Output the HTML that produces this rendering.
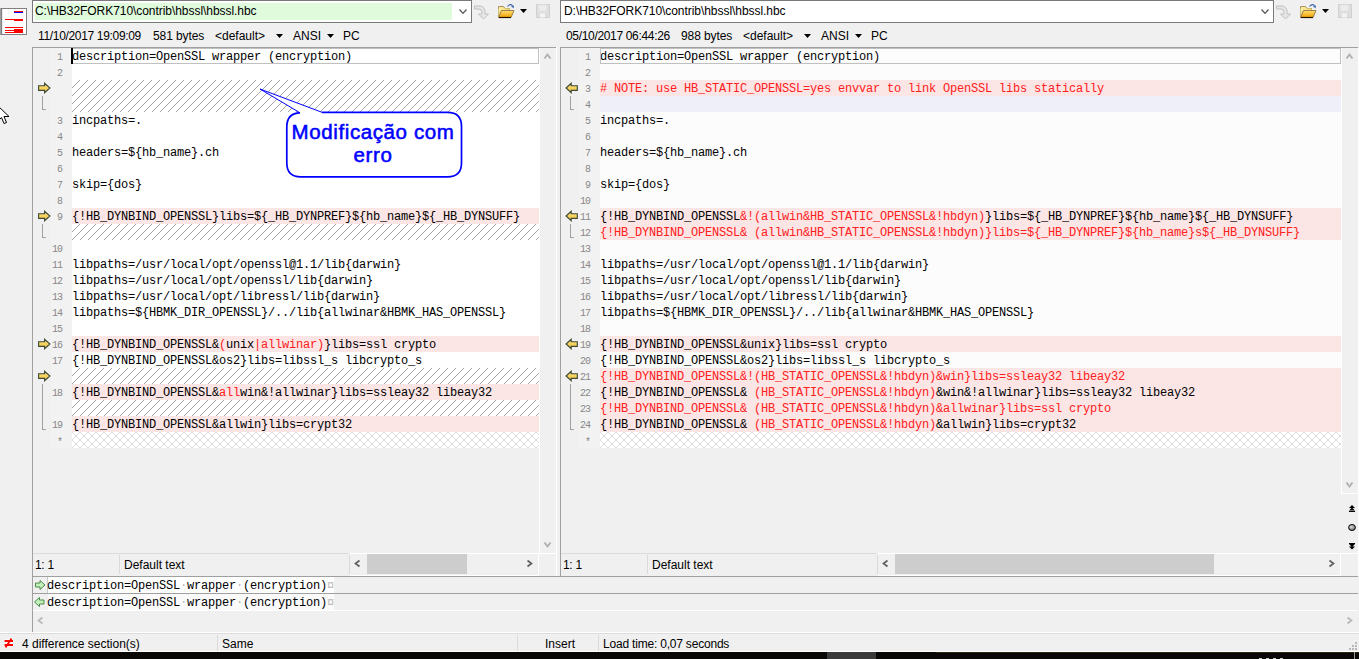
<!DOCTYPE html><html><head><meta charset="utf-8"><style>
*{margin:0;padding:0;box-sizing:border-box}
html,body{width:1359px;height:659px;overflow:hidden;background:#f0f0f0}
body{position:relative;font-family:"Liberation Sans",sans-serif;font-size:12px;color:#000}
.a{position:absolute;display:block}
.t{position:absolute;white-space:pre;line-height:16px;height:16px}
.code{position:absolute;white-space:pre;font-family:"Liberation Mono",monospace;font-size:12px;letter-spacing:-0.2px;line-height:16px;height:16px;color:#000;padding-top:1px}
.r{color:#ff2020}
.g{color:#b8b8b8}
.num{position:absolute;text-align:right;font-family:"Liberation Mono",monospace;font-size:10px;letter-spacing:-1px;line-height:16px;color:#888;height:16px;padding-top:2px}
</style></head><body>
<svg width="0" height="0" style="position:absolute"><defs>
<pattern id="hatch" patternUnits="userSpaceOnUse" width="8" height="8" x="0" y="0"><rect width="8" height="8" fill="#fff"/><g fill="#a8a8a8" shape-rendering="crispEdges"><rect x="7" y="0" width="1" height="1"/><rect x="6" y="1" width="1" height="1"/><rect x="5" y="2" width="1" height="1"/><rect x="4" y="3" width="1" height="1"/><rect x="3" y="4" width="1" height="1"/><rect x="2" y="5" width="1" height="1"/><rect x="1" y="6" width="1" height="1"/><rect x="0" y="7" width="1" height="1"/></g></pattern>
<pattern id="cross" patternUnits="userSpaceOnUse" width="8" height="8"><rect width="8" height="8" fill="#fff"/><g fill="#dcdcdc" shape-rendering="crispEdges"><rect x="7" y="0" width="1" height="1"/><rect x="6" y="1" width="1" height="1"/><rect x="5" y="2" width="1" height="1"/><rect x="4" y="3" width="1" height="1"/><rect x="3" y="4" width="1" height="1"/><rect x="2" y="5" width="1" height="1"/><rect x="1" y="6" width="1" height="1"/><rect x="0" y="7" width="1" height="1"/><rect x="0" y="0" width="1" height="1"/><rect x="1" y="1" width="1" height="1"/><rect x="2" y="2" width="1" height="1"/><rect x="3" y="3" width="1" height="1"/><rect x="4" y="4" width="1" height="1"/><rect x="5" y="5" width="1" height="1"/><rect x="6" y="6" width="1" height="1"/><rect x="7" y="7" width="1" height="1"/></g></pattern>
</defs></svg>
<div class="a" style="left:0px;top:8px;width:1px;height:27px;background:#a0a0a0;"></div>
<div class="a" style="left:1px;top:8px;width:26px;height:27px;border:1px solid #808080;background:#fff"></div>
<div class="a" style="left:2px;top:9px;width:1px;height:25px;background:#ececec;"></div>
<div class="a" style="left:14px;top:11px;width:9px;height:1px;background:#ff0000;"></div>
<div class="a" style="left:14px;top:12px;width:9px;height:1px;background:#0000ff;"></div>
<div class="a" style="left:5px;top:19px;width:9px;height:1px;background:#ff0000;"></div>
<div class="a" style="left:14px;top:19px;width:9px;height:2px;background:#ff0000;"></div>
<div class="a" style="left:5px;top:27px;width:18px;height:1px;background:#ff0000;"></div>
<div class="a" style="left:14px;top:29px;width:9px;height:4px;background:#ff0000;"></div>
<div class="a" style="left:5px;top:30px;width:9px;height:1px;background:#ff0000;"></div>
<div class="a" style="left:5px;top:32px;width:9px;height:1px;background:#ff0000;"></div>
<div class="a" style="left:32px;top:0px;width:440px;height:23px;border:1px solid #7a7a7a;background:#fff"></div>
<div class="a" style="left:35px;top:3px;width:417px;height:17px;background:#dffbdc;"></div>
<div class="t" style="left:35px;top:3px;letter-spacing:-0.05px">C:\HB32FORK710\contrib\hbssl\hbssl.hbc</div>
<svg class="a" style="left:459px;top:9px;overflow:visible" width="8" height="5"><path d="M0.5 0.5 L4.0 4.5 L7.5 0.5" fill="none" stroke="#505050" stroke-width="1.15"/></svg>
<svg class="a" style="left:474px;top:5px" width="16" height="15" viewBox="0 0 16 15">
<path d="M0.5 1 H6 Q10 1 11 6 V9 H14.5 L9.5 14 L4.5 9 H8 V7 Q7.5 4 5 4 H0.5 Z" fill="#e6e6e6" stroke="#c0c0c0" stroke-width="1"/></svg>
<svg class="a" style="left:497px;top:3px" width="18" height="16" viewBox="0 0 18 16">
<defs><linearGradient id="fg497" x1="0" y1="0" x2="1" y2="1"><stop offset="0" stop-color="#fff4a8"/><stop offset="1" stop-color="#e8c040"/></linearGradient>
<linearGradient id="fh497" x1="0" y1="0" x2="0" y2="1"><stop offset="0" stop-color="#ffe070"/><stop offset="1" stop-color="#f0a000"/></linearGradient></defs>
<path d="M1.5 14.5 V3.5 H6.5 L8 5.5 H12.5 V7.5" fill="url(#fg497)" stroke="#a89060" stroke-width="1"/>
<path d="M1.5 14.5 V5.5 H12.5 V8 H4.5 Z" fill="url(#fg497)" stroke="none"/>
<path d="M1.5 14.5 L4.5 7.5 H17 L14 14.5 Z" fill="url(#fh497)" stroke="#9a8050" stroke-width="1"/>
<path d="M2 14.5 H14" stroke="#201400" stroke-width="1.2"/>
<path d="M10.5 3.5 Q13 0.5 15.5 2.5" fill="none" stroke="#3a64a8" stroke-width="1.1"/><path d="M14 3 L17 2.5 L16.5 5.5 Z" fill="#3a64a8"/>
</svg>
<svg class="a" style="left:520px;top:9px" width="7" height="4"><path d="M0 0 H7 L3.5 4 Z" fill="#000"/></svg>
<svg class="a" style="left:536px;top:4px" width="14" height="14" viewBox="0 0 14 14">
<rect x="0.5" y="0.5" width="13" height="13" fill="#dedede" stroke="#d0d0d0"/>
<rect x="2.5" y="1" width="8" height="6" fill="#ececec" stroke="#e2e2e2"/>
<rect x="4" y="9.5" width="5" height="4" fill="#f4f4f4"/></svg>
<div class="a" style="left:560px;top:0px;width:714px;height:23px;border:1px solid #7a7a7a;background:#fff"></div>
<div class="t" style="left:564px;top:3px;letter-spacing:-0.05px">D:\HB32FORK710\contrib\hbssl\hbssl.hbc</div>
<svg class="a" style="left:1261px;top:9px;overflow:visible" width="8" height="5"><path d="M0.5 0.5 L4.0 4.5 L7.5 0.5" fill="none" stroke="#505050" stroke-width="1.15"/></svg>
<svg class="a" style="left:1276px;top:5px" width="16" height="15" viewBox="0 0 16 15">
<path d="M0.5 1 H6 Q10 1 11 6 V9 H14.5 L9.5 14 L4.5 9 H8 V7 Q7.5 4 5 4 H0.5 Z" fill="#e6e6e6" stroke="#c0c0c0" stroke-width="1"/></svg>
<svg class="a" style="left:1299px;top:3px" width="18" height="16" viewBox="0 0 18 16">
<defs><linearGradient id="fg1299" x1="0" y1="0" x2="1" y2="1"><stop offset="0" stop-color="#fff4a8"/><stop offset="1" stop-color="#e8c040"/></linearGradient>
<linearGradient id="fh1299" x1="0" y1="0" x2="0" y2="1"><stop offset="0" stop-color="#ffe070"/><stop offset="1" stop-color="#f0a000"/></linearGradient></defs>
<path d="M1.5 14.5 V3.5 H6.5 L8 5.5 H12.5 V7.5" fill="url(#fg1299)" stroke="#a89060" stroke-width="1"/>
<path d="M1.5 14.5 V5.5 H12.5 V8 H4.5 Z" fill="url(#fg1299)" stroke="none"/>
<path d="M1.5 14.5 L4.5 7.5 H17 L14 14.5 Z" fill="url(#fh1299)" stroke="#9a8050" stroke-width="1"/>
<path d="M2 14.5 H14" stroke="#201400" stroke-width="1.2"/>
<path d="M10.5 3.5 Q13 0.5 15.5 2.5" fill="none" stroke="#3a64a8" stroke-width="1.1"/><path d="M14 3 L17 2.5 L16.5 5.5 Z" fill="#3a64a8"/>
</svg>
<svg class="a" style="left:1322px;top:9px" width="7" height="4"><path d="M0 0 H7 L3.5 4 Z" fill="#000"/></svg>
<svg class="a" style="left:1338px;top:4px" width="14" height="14" viewBox="0 0 14 14">
<rect x="0.5" y="0.5" width="13" height="13" fill="#dedede" stroke="#d0d0d0"/>
<rect x="2.5" y="1" width="8" height="6" fill="#ececec" stroke="#e2e2e2"/>
<rect x="4" y="9.5" width="5" height="4" fill="#f4f4f4"/></svg>
<div class="t" style="left:38px;top:28px;letter-spacing:-0.33px">11/10/2017 19:09:09</div>
<div class="t" style="left:153px;top:28px;letter-spacing:-0.1px">581 bytes</div>
<div class="t" style="left:215px;top:28px;">&lt;default&gt;</div>
<svg class="a" style="left:276px;top:34px" width="7" height="4"><path d="M0 0 H7 L3.5 4 Z" fill="#000"/></svg>
<div class="t" style="left:293px;top:28px;">ANSI</div>
<svg class="a" style="left:327px;top:34px" width="7" height="4"><path d="M0 0 H7 L3.5 4 Z" fill="#000"/></svg>
<div class="t" style="left:343px;top:28px;">PC</div>
<div class="t" style="left:566px;top:28px;letter-spacing:-0.33px">05/10/2017 06:44:26</div>
<div class="t" style="left:681px;top:28px;letter-spacing:-0.1px">988 bytes</div>
<div class="t" style="left:743px;top:28px;">&lt;default&gt;</div>
<svg class="a" style="left:804px;top:34px" width="7" height="4"><path d="M0 0 H7 L3.5 4 Z" fill="#000"/></svg>
<div class="t" style="left:821px;top:28px;">ANSI</div>
<svg class="a" style="left:855px;top:34px" width="7" height="4"><path d="M0 0 H7 L3.5 4 Z" fill="#000"/></svg>
<div class="t" style="left:871px;top:28px;">PC</div>
<div class="a" style="left:32px;top:47px;width:524px;height:1px;background:#a0a0a0;"></div>
<div class="a" style="left:560px;top:47px;width:798px;height:1px;background:#a0a0a0;"></div>
<div class="a" style="left:32px;top:47px;width:1px;height:585px;background:#a0a0a0;"></div>
<div class="a" style="left:560px;top:47px;width:1px;height:529px;background:#a0a0a0;"></div>
<div class="a" style="left:556px;top:47px;width:1px;height:529px;background:#fff;"></div>
<div class="a" style="left:1358px;top:48px;width:1px;height:528px;background:#fff;"></div>
<div class="a" style="left:51px;top:48px;width:21px;height:400px;background:#f2f2f2"></div>
<div class="a" style="left:72px;top:48px;width:467px;height:16px;background:#ffffff"></div>
<div class="num" style="left:51px;top:48px;width:11px;">1</div>
<div class="code" style="left:72px;top:48px">description=OpenSSL wrapper (encryption)</div>
<div class="a" style="left:72px;top:64px;width:467px;height:16px;background:#ffffff"></div>
<div class="num" style="left:51px;top:64px;width:11px;">2</div>
<svg class="a" style="left:72px;top:80px" width="467" height="16"><rect width="467" height="16" fill="url(#hatch)"/></svg>
<svg class="a" style="left:72px;top:96px" width="467" height="16"><rect width="467" height="16" fill="url(#hatch)"/></svg>
<div class="a" style="left:72px;top:112px;width:467px;height:16px;background:#ffffff"></div>
<div class="num" style="left:51px;top:112px;width:11px;">3</div>
<div class="code" style="left:72px;top:112px">incpaths=.</div>
<div class="a" style="left:72px;top:128px;width:467px;height:16px;background:#ffffff"></div>
<div class="num" style="left:51px;top:128px;width:11px;">4</div>
<div class="a" style="left:72px;top:144px;width:467px;height:16px;background:#ffffff"></div>
<div class="num" style="left:51px;top:144px;width:11px;">5</div>
<div class="code" style="left:72px;top:144px">headers=${hb_name}.ch</div>
<div class="a" style="left:72px;top:160px;width:467px;height:16px;background:#ffffff"></div>
<div class="num" style="left:51px;top:160px;width:11px;">6</div>
<div class="a" style="left:72px;top:176px;width:467px;height:16px;background:#ffffff"></div>
<div class="num" style="left:51px;top:176px;width:11px;">7</div>
<div class="code" style="left:72px;top:176px">skip={dos}</div>
<div class="a" style="left:72px;top:192px;width:467px;height:16px;background:#ffffff"></div>
<div class="num" style="left:51px;top:192px;width:11px;">8</div>
<div class="a" style="left:72px;top:208px;width:467px;height:16px;background:#fbe5e5"></div>
<div class="num" style="left:51px;top:208px;width:11px;">9</div>
<div class="code" style="left:72px;top:208px">{!HB_DYNBIND_OPENSSL}libs=${_HB_DYNPREF}${hb_name}${_HB_DYNSUFF}</div>
<svg class="a" style="left:72px;top:224px" width="467" height="16"><rect width="467" height="16" fill="url(#hatch)"/></svg>
<div class="a" style="left:72px;top:240px;width:467px;height:16px;background:#ffffff"></div>
<div class="num" style="left:51px;top:240px;width:11px;">10</div>
<div class="a" style="left:72px;top:256px;width:467px;height:16px;background:#ffffff"></div>
<div class="num" style="left:51px;top:256px;width:11px;">11</div>
<div class="code" style="left:72px;top:256px">libpaths=/usr/local/opt/openssl@1.1/lib{darwin}</div>
<div class="a" style="left:72px;top:272px;width:467px;height:16px;background:#ffffff"></div>
<div class="num" style="left:51px;top:272px;width:11px;">12</div>
<div class="code" style="left:72px;top:272px">libpaths=/usr/local/opt/openssl/lib{darwin}</div>
<div class="a" style="left:72px;top:288px;width:467px;height:16px;background:#ffffff"></div>
<div class="num" style="left:51px;top:288px;width:11px;">13</div>
<div class="code" style="left:72px;top:288px">libpaths=/usr/local/opt/libressl/lib{darwin}</div>
<div class="a" style="left:72px;top:304px;width:467px;height:16px;background:#ffffff"></div>
<div class="num" style="left:51px;top:304px;width:11px;">14</div>
<div class="code" style="left:72px;top:304px">libpaths=${HBMK_DIR_OPENSSL}/../lib{allwinar&amp;HBMK_HAS_OPENSSL}</div>
<div class="a" style="left:72px;top:320px;width:467px;height:16px;background:#ffffff"></div>
<div class="num" style="left:51px;top:320px;width:11px;">15</div>
<div class="a" style="left:72px;top:336px;width:467px;height:16px;background:#fbe5e5"></div>
<div class="num" style="left:51px;top:336px;width:11px;">16</div>
<div class="code" style="left:72px;top:336px">{!HB_DYNBIND_OPENSSL&amp;<span class="r">(</span>unix<span class="r">|allwinar)</span>}libs=ssl crypto</div>
<div class="a" style="left:72px;top:352px;width:467px;height:16px;background:#ffffff"></div>
<div class="num" style="left:51px;top:352px;width:11px;">17</div>
<div class="code" style="left:72px;top:352px">{!HB_DYNBIND_OPENSSL&amp;os2}libs=libssl_s libcrypto_s</div>
<svg class="a" style="left:72px;top:368px" width="467" height="16"><rect width="467" height="16" fill="url(#hatch)"/></svg>
<div class="a" style="left:72px;top:384px;width:467px;height:16px;background:#fbe5e5"></div>
<div class="num" style="left:51px;top:384px;width:11px;">18</div>
<div class="code" style="left:72px;top:384px">{!HB_DYNBIND_OPENSSL&amp;<span class="r">all</span>win&amp;!allwinar}libs=ssleay32 libeay32</div>
<svg class="a" style="left:72px;top:400px" width="467" height="16"><rect width="467" height="16" fill="url(#hatch)"/></svg>
<div class="a" style="left:72px;top:416px;width:467px;height:16px;background:#fbe5e5"></div>
<div class="num" style="left:51px;top:416px;width:11px;">19</div>
<div class="code" style="left:72px;top:416px">{!HB_DYNBIND_OPENSSL&amp;allwin}libs=crypt32</div>
<svg class="a" style="left:72px;top:432px" width="467" height="16"><rect width="467" height="16" fill="url(#cross)"/></svg>
<div class="num" style="left:51px;top:432px;width:11px;padding-top:3px;">*</div>
<div class="a" style="left:579px;top:48px;width:21px;height:400px;background:#f2f2f2"></div>
<div class="a" style="left:600px;top:48px;width:741px;height:16px;background:#fcfcfc"></div>
<div class="num" style="left:579px;top:48px;width:11px;">1</div>
<div class="code" style="left:600px;top:48px">description=OpenSSL wrapper (encryption)</div>
<div class="a" style="left:600px;top:64px;width:741px;height:16px;background:#fcfcfc"></div>
<div class="num" style="left:579px;top:64px;width:11px;">2</div>
<div class="a" style="left:600px;top:80px;width:741px;height:16px;background:#fbe5e5"></div>
<div class="num" style="left:579px;top:80px;width:11px;">3</div>
<div class="code" style="left:600px;top:80px"><span class="r"># NOTE: use HB_STATIC_OPENSSL=yes envvar to link OpenSSL libs statically</span></div>
<div class="a" style="left:600px;top:96px;width:741px;height:16px;background:#efeffa"></div>
<div class="num" style="left:579px;top:96px;width:11px;">4</div>
<div class="a" style="left:600px;top:112px;width:741px;height:16px;background:#fcfcfc"></div>
<div class="num" style="left:579px;top:112px;width:11px;">5</div>
<div class="code" style="left:600px;top:112px">incpaths=.</div>
<div class="a" style="left:600px;top:128px;width:741px;height:16px;background:#fcfcfc"></div>
<div class="num" style="left:579px;top:128px;width:11px;">6</div>
<div class="a" style="left:600px;top:144px;width:741px;height:16px;background:#fcfcfc"></div>
<div class="num" style="left:579px;top:144px;width:11px;">7</div>
<div class="code" style="left:600px;top:144px">headers=${hb_name}.ch</div>
<div class="a" style="left:600px;top:160px;width:741px;height:16px;background:#fcfcfc"></div>
<div class="num" style="left:579px;top:160px;width:11px;">8</div>
<div class="a" style="left:600px;top:176px;width:741px;height:16px;background:#fcfcfc"></div>
<div class="num" style="left:579px;top:176px;width:11px;">9</div>
<div class="code" style="left:600px;top:176px">skip={dos}</div>
<div class="a" style="left:600px;top:192px;width:741px;height:16px;background:#fcfcfc"></div>
<div class="num" style="left:579px;top:192px;width:11px;">10</div>
<div class="a" style="left:600px;top:208px;width:741px;height:16px;background:#fbe5e5"></div>
<div class="num" style="left:579px;top:208px;width:11px;">11</div>
<div class="code" style="left:600px;top:208px">{!HB_DYNBIND_OPENSSL<span class="r">&amp;!(allwin&amp;HB_STATIC_OPENSSL&amp;!hbdyn)</span>}libs=${_HB_DYNPREF}${hb_name}${_HB_DYNSUFF}</div>
<div class="a" style="left:600px;top:224px;width:741px;height:16px;background:#fbe5e5"></div>
<div class="num" style="left:579px;top:224px;width:11px;">12</div>
<div class="code" style="left:600px;top:224px"><span class="r">{!HB_DYNBIND_OPENSSL&amp; (allwin&amp;HB_STATIC_OPENSSL&amp;!hbdyn)}libs=${_HB_DYNPREF}${hb_name}s${_HB_DYNSUFF}</span></div>
<div class="a" style="left:600px;top:240px;width:741px;height:16px;background:#fcfcfc"></div>
<div class="num" style="left:579px;top:240px;width:11px;">13</div>
<div class="a" style="left:600px;top:256px;width:741px;height:16px;background:#fcfcfc"></div>
<div class="num" style="left:579px;top:256px;width:11px;">14</div>
<div class="code" style="left:600px;top:256px">libpaths=/usr/local/opt/openssl@1.1/lib{darwin}</div>
<div class="a" style="left:600px;top:272px;width:741px;height:16px;background:#fcfcfc"></div>
<div class="num" style="left:579px;top:272px;width:11px;">15</div>
<div class="code" style="left:600px;top:272px">libpaths=/usr/local/opt/openssl/lib{darwin}</div>
<div class="a" style="left:600px;top:288px;width:741px;height:16px;background:#fcfcfc"></div>
<div class="num" style="left:579px;top:288px;width:11px;">16</div>
<div class="code" style="left:600px;top:288px">libpaths=/usr/local/opt/libressl/lib{darwin}</div>
<div class="a" style="left:600px;top:304px;width:741px;height:16px;background:#fcfcfc"></div>
<div class="num" style="left:579px;top:304px;width:11px;">17</div>
<div class="code" style="left:600px;top:304px">libpaths=${HBMK_DIR_OPENSSL}/../lib{allwinar&amp;HBMK_HAS_OPENSSL}</div>
<div class="a" style="left:600px;top:320px;width:741px;height:16px;background:#fcfcfc"></div>
<div class="num" style="left:579px;top:320px;width:11px;">18</div>
<div class="a" style="left:600px;top:336px;width:741px;height:16px;background:#fbe5e5"></div>
<div class="num" style="left:579px;top:336px;width:11px;">19</div>
<div class="code" style="left:600px;top:336px">{!HB_DYNBIND_OPENSSL&amp;unix}libs=ssl crypto</div>
<div class="a" style="left:600px;top:352px;width:741px;height:16px;background:#fcfcfc"></div>
<div class="num" style="left:579px;top:352px;width:11px;">20</div>
<div class="code" style="left:600px;top:352px">{!HB_DYNBIND_OPENSSL&amp;os2}libs=libssl_s libcrypto_s</div>
<div class="a" style="left:600px;top:368px;width:741px;height:16px;background:#fbe5e5"></div>
<div class="num" style="left:579px;top:368px;width:11px;">21</div>
<div class="code" style="left:600px;top:368px"><span class="r">{!HB_DYNBIND_OPENSSL&amp;!(HB_STATIC_OPENSSL&amp;!hbdyn)&amp;win}libs=ssleay32 libeay32</span></div>
<div class="a" style="left:600px;top:384px;width:741px;height:16px;background:#fbe5e5"></div>
<div class="num" style="left:579px;top:384px;width:11px;">22</div>
<div class="code" style="left:600px;top:384px">{!HB_DYNBIND_OPENSSL&amp; <span class="r">(HB_STATIC_OPENSSL&amp;!hbdyn)</span>&amp;win&amp;!allwinar}libs=ssleay32 libeay32</div>
<div class="a" style="left:600px;top:400px;width:741px;height:16px;background:#fbe5e5"></div>
<div class="num" style="left:579px;top:400px;width:11px;">23</div>
<div class="code" style="left:600px;top:400px"><span class="r">{!HB_DYNBIND_OPENSSL&amp; (HB_STATIC_OPENSSL&amp;!hbdyn)&amp;allwinar}libs=ssl crypto</span></div>
<div class="a" style="left:600px;top:416px;width:741px;height:16px;background:#fbe5e5"></div>
<div class="num" style="left:579px;top:416px;width:11px;">24</div>
<div class="code" style="left:600px;top:416px">{!HB_DYNBIND_OPENSSL&amp; <span class="r">(HB_STATIC_OPENSSL&amp;!hbdyn)</span>&amp;allwin}libs=crypt32</div>
<svg class="a" style="left:600px;top:432px" width="741" height="16"><rect width="741" height="16" fill="url(#cross)"/></svg>
<div class="num" style="left:579px;top:432px;width:11px;padding-top:3px;">*</div>
<div class="a" style="left:72px;top:48px;width:467px;height:16px;border:1px solid #c0c0c0;border-left:none"></div>
<div class="a" style="left:71px;top:48px;width:2px;height:16px;background:#000;"></div>
<div class="a" style="left:600px;top:48px;width:741px;height:16px;border:1px solid #c0c0c0"></div>
<svg class="a" style="left:38px;top:82px" width="14" height="12" viewBox="0 0 14 12"><defs><linearGradient id="ga3880" x1="0" y1="0" x2="0" y2="1"><stop offset="0" stop-color="#ffe680"/><stop offset="1" stop-color="#f0c040"/></linearGradient></defs><path d="M0.6 3.7 H6.6 V1.3 L11.9 6 L6.6 10.7 V8.3 H0.6 Z" fill="url(#ga3880)" stroke="#3c4a38" stroke-width="1.15" stroke-linejoin="miter"/></svg>
<svg class="a" style="left:38px;top:210px" width="14" height="12" viewBox="0 0 14 12"><defs><linearGradient id="ga38208" x1="0" y1="0" x2="0" y2="1"><stop offset="0" stop-color="#ffe680"/><stop offset="1" stop-color="#f0c040"/></linearGradient></defs><path d="M0.6 3.7 H6.6 V1.3 L11.9 6 L6.6 10.7 V8.3 H0.6 Z" fill="url(#ga38208)" stroke="#3c4a38" stroke-width="1.15" stroke-linejoin="miter"/></svg>
<svg class="a" style="left:38px;top:338px" width="14" height="12" viewBox="0 0 14 12"><defs><linearGradient id="ga38336" x1="0" y1="0" x2="0" y2="1"><stop offset="0" stop-color="#ffe680"/><stop offset="1" stop-color="#f0c040"/></linearGradient></defs><path d="M0.6 3.7 H6.6 V1.3 L11.9 6 L6.6 10.7 V8.3 H0.6 Z" fill="url(#ga38336)" stroke="#3c4a38" stroke-width="1.15" stroke-linejoin="miter"/></svg>
<svg class="a" style="left:38px;top:370px" width="14" height="12" viewBox="0 0 14 12"><defs><linearGradient id="ga38368" x1="0" y1="0" x2="0" y2="1"><stop offset="0" stop-color="#ffe680"/><stop offset="1" stop-color="#f0c040"/></linearGradient></defs><path d="M0.6 3.7 H6.6 V1.3 L11.9 6 L6.6 10.7 V8.3 H0.6 Z" fill="url(#ga38368)" stroke="#3c4a38" stroke-width="1.15" stroke-linejoin="miter"/></svg>
<div class="a" style="left:42px;top:96px;width:1px;height:14px;background:#a0a0a0;"></div><div class="a" style="left:42px;top:109px;width:4px;height:1px;background:#a0a0a0;"></div>
<div class="a" style="left:42px;top:224px;width:1px;height:14px;background:#a0a0a0;"></div><div class="a" style="left:42px;top:237px;width:4px;height:1px;background:#a0a0a0;"></div>
<div class="a" style="left:42px;top:384px;width:1px;height:46px;background:#a0a0a0;"></div><div class="a" style="left:42px;top:429px;width:4px;height:1px;background:#a0a0a0;"></div>
<svg class="a" style="left:565px;top:82px" width="14" height="12" viewBox="0 0 14 12"><defs><linearGradient id="gb56580" x1="0" y1="0" x2="0" y2="1"><stop offset="0" stop-color="#ffe680"/><stop offset="1" stop-color="#f0c040"/></linearGradient></defs><path d="M1.1 6 L6.2 1.3 V3.7 H12.3 V8.3 H6.2 V10.7 Z" fill="url(#gb56580)" stroke="#3c4a38" stroke-width="1.15" stroke-linejoin="miter"/></svg>
<svg class="a" style="left:565px;top:210px" width="14" height="12" viewBox="0 0 14 12"><defs><linearGradient id="gb565208" x1="0" y1="0" x2="0" y2="1"><stop offset="0" stop-color="#ffe680"/><stop offset="1" stop-color="#f0c040"/></linearGradient></defs><path d="M1.1 6 L6.2 1.3 V3.7 H12.3 V8.3 H6.2 V10.7 Z" fill="url(#gb565208)" stroke="#3c4a38" stroke-width="1.15" stroke-linejoin="miter"/></svg>
<svg class="a" style="left:565px;top:338px" width="14" height="12" viewBox="0 0 14 12"><defs><linearGradient id="gb565336" x1="0" y1="0" x2="0" y2="1"><stop offset="0" stop-color="#ffe680"/><stop offset="1" stop-color="#f0c040"/></linearGradient></defs><path d="M1.1 6 L6.2 1.3 V3.7 H12.3 V8.3 H6.2 V10.7 Z" fill="url(#gb565336)" stroke="#3c4a38" stroke-width="1.15" stroke-linejoin="miter"/></svg>
<svg class="a" style="left:565px;top:370px" width="14" height="12" viewBox="0 0 14 12"><defs><linearGradient id="gb565368" x1="0" y1="0" x2="0" y2="1"><stop offset="0" stop-color="#ffe680"/><stop offset="1" stop-color="#f0c040"/></linearGradient></defs><path d="M1.1 6 L6.2 1.3 V3.7 H12.3 V8.3 H6.2 V10.7 Z" fill="url(#gb565368)" stroke="#3c4a38" stroke-width="1.15" stroke-linejoin="miter"/></svg>
<div class="a" style="left:570px;top:96px;width:1px;height:14px;background:#a0a0a0;"></div><div class="a" style="left:570px;top:109px;width:4px;height:1px;background:#a0a0a0;"></div>
<div class="a" style="left:570px;top:224px;width:1px;height:14px;background:#a0a0a0;"></div><div class="a" style="left:570px;top:237px;width:4px;height:1px;background:#a0a0a0;"></div>
<div class="a" style="left:570px;top:384px;width:1px;height:46px;background:#a0a0a0;"></div><div class="a" style="left:570px;top:429px;width:4px;height:1px;background:#a0a0a0;"></div>
<div class="a" style="left:539px;top:48px;width:1px;height:505px;background:#fff;"></div>
<div class="a" style="left:1341px;top:48px;width:1px;height:446px;background:#fff;"></div>
<div class="a" style="left:1342px;top:493px;width:16px;height:1px;background:#fff;"></div>
<svg class="a" style="left:544px;top:54px;overflow:visible" width="7" height="5"><path d="M0.5 4.5 L3.5 0.5 L6.5 4.5" fill="none" stroke="#b0b0b0" stroke-width="1.9"/></svg>
<svg class="a" style="left:544px;top:542px;overflow:visible" width="7" height="5"><path d="M0.5 0.5 L3.5 4.5 L6.5 0.5" fill="none" stroke="#b0b0b0" stroke-width="1.9"/></svg>
<svg class="a" style="left:1346px;top:54px;overflow:visible" width="7" height="5"><path d="M0.5 4.5 L3.5 0.5 L6.5 4.5" fill="none" stroke="#b0b0b0" stroke-width="1.9"/></svg>
<svg class="a" style="left:1346px;top:482px;overflow:visible" width="7" height="5"><path d="M0.5 0.5 L3.5 4.5 L6.5 0.5" fill="none" stroke="#b0b0b0" stroke-width="1.9"/></svg>
<svg class="a" style="left:1349px;top:505px" width="6" height="7"><path d="M3 0 L6 3 H0 Z M3 2.5 L6 5.5 H0 Z" fill="#000"/><rect x="0" y="6" width="6" height="1" fill="#000"/></svg>
<svg class="a" style="left:1348px;top:524px" width="8" height="7"><defs><radialGradient id="rb" cx="0.4" cy="0.4" r="0.6"><stop offset="0" stop-color="#e0e0e0"/><stop offset="1" stop-color="#707070"/></radialGradient></defs><ellipse cx="4" cy="3.5" rx="3.4" ry="3" fill="url(#rb)" stroke="#000" stroke-width="1"/></svg>
<svg class="a" style="left:1349px;top:543px" width="6" height="7"><rect x="0" y="0" width="6" height="1" fill="#000"/><path d="M0 1 L3 4 L6 1 Z M0 3.5 L3 6.5 L6 3.5 Z" fill="#000"/></svg>
<div class="a" style="left:33px;top:553px;width:316px;height:1px;background:#dadada;"></div>
<div class="a" style="left:350px;top:553px;width:207px;height:1px;background:#fff;"></div>
<div class="a" style="left:119px;top:555px;width:1px;height:19px;background:#dadada;"></div>
<div class="a" style="left:349px;top:555px;width:1px;height:19px;background:#dadada;"></div>
<div class="t" style="left:35px;top:557px;letter-spacing:-0.3px">1: 1</div>
<div class="t" style="left:124px;top:557px;">Default text</div>
<div class="a" style="left:350px;top:575px;width:189px;height:1px;background:#fff;"></div>
<div class="a" style="left:367px;top:554px;width:100px;height:20px;background:#cdcdcd;"></div>
<svg class="a" style="left:355px;top:560px;overflow:visible" width="5" height="7"><path d="M4.5 0.5 L0.5 3.5 L4.5 6.5" fill="none" stroke="#606060" stroke-width="1.7"/></svg>
<svg class="a" style="left:527px;top:560px;overflow:visible" width="5" height="7"><path d="M0.5 0.5 L4.5 3.5 L0.5 6.5" fill="none" stroke="#606060" stroke-width="1.7"/></svg>
<div class="a" style="left:538px;top:553px;width:1px;height:23px;background:#fff;"></div>
<div class="a" style="left:561px;top:553px;width:316px;height:1px;background:#dadada;"></div>
<div class="a" style="left:878px;top:553px;width:481px;height:1px;background:#fff;"></div>
<div class="a" style="left:647px;top:555px;width:1px;height:19px;background:#dadada;"></div>
<div class="a" style="left:877px;top:555px;width:1px;height:19px;background:#dadada;"></div>
<div class="t" style="left:563px;top:557px;letter-spacing:-0.3px">1: 1</div>
<div class="t" style="left:652px;top:557px;">Default text</div>
<div class="a" style="left:878px;top:575px;width:463px;height:1px;background:#fff;"></div>
<div class="a" style="left:895px;top:554px;width:319px;height:20px;background:#cdcdcd;"></div>
<svg class="a" style="left:883px;top:560px;overflow:visible" width="5" height="7"><path d="M4.5 0.5 L0.5 3.5 L4.5 6.5" fill="none" stroke="#606060" stroke-width="1.7"/></svg>
<svg class="a" style="left:1329px;top:560px;overflow:visible" width="5" height="7"><path d="M0.5 0.5 L4.5 3.5 L0.5 6.5" fill="none" stroke="#606060" stroke-width="1.7"/></svg>
<div class="a" style="left:1340px;top:553px;width:1px;height:23px;background:#fff;"></div>
<div class="a" style="left:32px;top:576px;width:1326px;height:1px;background:#a0a0a0;"></div>
<div class="a" style="left:48px;top:577px;width:286px;height:16px;background:#ffffff;"></div>
<div class="a" style="left:47px;top:577px;width:1px;height:16px;background:#c8c8c8;"></div>
<div class="a" style="left:33px;top:593px;width:1325px;height:1px;background:#a0a0a0;"></div>
<div class="a" style="left:48px;top:594px;width:286px;height:16px;background:#fafafa;"></div>
<div class="code" style="left:47px;top:577px">description=OpenSSL<span class="g">·</span>wrapper<span class="g">·</span>(encryption)<span class="g">¤</span></div>
<div class="code" style="left:47px;top:594px">description=OpenSSL<span class="g">·</span>wrapper<span class="g">·</span>(encryption)<span class="g">¤</span></div>
<svg class="a" style="left:34px;top:579px" width="13" height="12" viewBox="0 0 13 12"><path d="M1.5 4 H6 V1.5 L11 6 L6 10.5 V8 H1.5 Z" fill="#c4f0bc" stroke="#4a8a4a" stroke-width="1"/></svg>
<svg class="a" style="left:33px;top:596px" width="13" height="12" viewBox="0 0 13 12"><path d="M1.5 6 L6.5 1.5 V4 H11 V8 H6.5 V10.5 Z" fill="#c4f0bc" stroke="#4a8a4a" stroke-width="1"/></svg>
<div class="a" style="left:33px;top:610px;width:1325px;height:1px;background:#fff;"></div>
<svg class="a" style="left:38px;top:617px;overflow:visible" width="5" height="7"><path d="M4.5 0.5 L0.5 3.5 L4.5 6.5" fill="none" stroke="#b8b8b8" stroke-width="1.7"/></svg>
<svg class="a" style="left:1347px;top:617px;overflow:visible" width="5" height="7"><path d="M0.5 0.5 L4.5 3.5 L0.5 6.5" fill="none" stroke="#b8b8b8" stroke-width="1.7"/></svg>
<div class="a" style="left:0px;top:632px;width:1359px;height:1px;background:#fff;"></div>
<div class="a" style="left:0px;top:633px;width:1359px;height:1px;background:#dcdcdc;"></div>
<svg class="a" style="left:3px;top:637px" width="12" height="12" viewBox="0 0 12 12"><path d="M1 4 H10 M1 8 H10 M8.5 1 L2.5 11" stroke="#fff" stroke-width="3.2"/><path d="M1.5 4 H10 M1.5 8 H10 M8.5 1.5 L2.5 10.5" stroke="#ff0000" stroke-width="1.8"/></svg>
<div class="t" style="left:22px;top:636px;">4 difference section(s)</div>
<div class="a" style="left:217px;top:635px;width:1px;height:16px;background:#dadada;"></div>
<div class="t" style="left:222px;top:636px;">Same</div>
<div class="a" style="left:517px;top:635px;width:1px;height:16px;background:#dadada;"></div>
<div class="t" style="left:545px;top:636px;">Insert</div>
<div class="a" style="left:598px;top:635px;width:1px;height:16px;background:#dadada;"></div>
<div class="t" style="left:603px;top:636px;letter-spacing:-0.2px">Load time: 0,07 seconds</div>
<div class="a" style="left:1355px;top:642px;width:2px;height:2px;background:#b8b8b8;"></div>
<div class="a" style="left:1352px;top:645px;width:2px;height:2px;background:#b8b8b8;"></div>
<div class="a" style="left:1355px;top:645px;width:2px;height:2px;background:#b8b8b8;"></div>
<div class="a" style="left:1349px;top:648px;width:2px;height:2px;background:#b8b8b8;"></div>
<div class="a" style="left:1352px;top:648px;width:2px;height:2px;background:#b8b8b8;"></div>
<div class="a" style="left:1355px;top:648px;width:2px;height:2px;background:#b8b8b8;"></div>
<div class="a" style="left:0px;top:651px;width:1359px;height:1px;background:#ffffff;"></div>
<div class="a" style="left:0px;top:652px;width:1359px;height:7px;background:#0a0806;"></div>
<div class="a" style="left:827px;top:652px;width:49px;height:7px;background:#3a3a3a;"></div>
<div class="a" style="left:936px;top:652px;width:423px;height:1px;background:#2a2408;"></div>
<div class="a" style="left:1354px;top:652px;width:1px;height:7px;background:#9a9a9a;"></div>
<div class="a" style="left:1259px;top:658px;width:3px;height:1px;background:#cccccc;"></div>
<div class="a" style="left:1266px;top:658px;width:3px;height:1px;background:#cccccc;"></div>
<div class="a" style="left:1273px;top:658px;width:3px;height:1px;background:#cccccc;"></div>
<div class="a" style="left:1280px;top:658px;width:3px;height:1px;background:#cccccc;"></div>
<svg class="a" style="left:-3px;top:105px" width="16" height="22" viewBox="0 0 16 22"><path d="M0.5 0.5 V16.5 L4.5 12.5 L7 18.5 L9.5 17.5 L7 11.5 H12 Z" fill="#fff" stroke="#000" stroke-width="1" stroke-linejoin="round"/></svg>
<svg class="a" style="left:250px;top:80px" width="220" height="105" viewBox="250 80 220 105"><path d="M260 89 L300 112.8 Q286.8 113 286.8 127 V163 Q286.8 176.8 300.8 176.8 H447.5 Q461.5 176.8 461.5 163 V126.3 Q461.5 112.3 447.5 112.3 H322 Z" fill="#fff" stroke="none"/><path d="M300 112.8 Q286.8 113 286.8 127 V163 Q286.8 176.8 300.8 176.8 H447.5 Q461.5 176.8 461.5 163 V126.3 Q461.5 112.3 447.5 112.3 H322" fill="none" stroke="#0000ff" stroke-width="1.7"/><path d="M300 112.8 L260 89 L322 112.3" fill="none" stroke="#0000ff" stroke-width="1"/></svg>
<div class="t" style="left:273px;top:121px;font-size:20.5px;-webkit-text-stroke:0.55px #0000ff;letter-spacing:0.6px;line-height:22px;height:22px;color:#0000ff;width:200px;text-align:center">Modificação com</div>
<div class="t" style="left:273px;top:144px;font-size:20.5px;-webkit-text-stroke:0.55px #0000ff;letter-spacing:0.6px;line-height:22px;height:22px;color:#0000ff;width:200px;text-align:center">erro</div>
</body></html>
